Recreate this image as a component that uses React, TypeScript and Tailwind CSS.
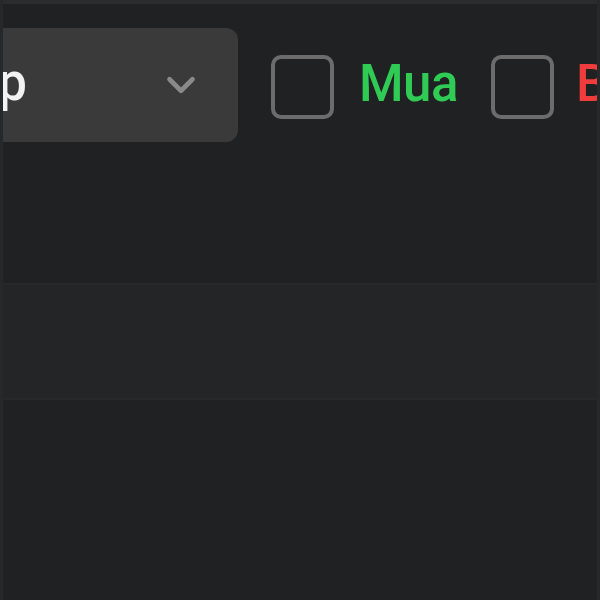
import React from "react";
import { ChevronDown } from "lucide-react";

function Check({ label, color, gap }: { label: string; color: string; gap: string }) {
  return (
    <label className={`flex items-center shrink-0 ${gap}`}>
      <span className="block w-[63px] h-[64px] rounded-[10px] border-[4px] border-[#6c6c6c] bg-[#202123]" />
      <span className={`text-[51px] font-medium leading-none tracking-[-0.5px] mb-[6px] ${color}`}>
        {label}
      </span>
    </label>
  );
}

export default function App() {
  return (
    <div
      className="w-[600px] h-[600px] overflow-hidden bg-[#202123] border-x-[3px] border-[#27282a]"
      style={{ fontFamily: "Roboto, 'Noto Sans', sans-serif" }}
    >
      <div className="h-[4px] bg-[#2b2c2e] -mx-[3px]" />
      <div className="mt-[24px] -ml-[3px] flex items-center">
        <div className="w-[238px] h-[114px] shrink-0 rounded-r-[12px] bg-[#3a3a3a] flex items-center">
          <div className="w-[27px] overflow-hidden flex justify-end">
            <span className="text-[51px] font-medium leading-none text-[#f2f2f2] whitespace-nowrap mb-[6px]">
              Top
            </span>
          </div>
          <ChevronDown
            className="ml-[131px] text-[#8a8a8a]"
            size={46}
            strokeWidth={2.4}
          />
        </div>
        <div className="ml-[33px] mt-[3px] flex items-center gap-[33px]">
          <Check label="Mua" color="text-[#2fcb55]" gap="gap-[25px]" />
          <Check label="Bán" color="text-[#f03c3c]" gap="gap-[22px]" />
        </div>
      </div>
      <div className="mt-[141px] h-[117px] bg-[#242527] border-y-[2px] border-[#27282a] -mx-[3px]" />
    </div>
  );
}
